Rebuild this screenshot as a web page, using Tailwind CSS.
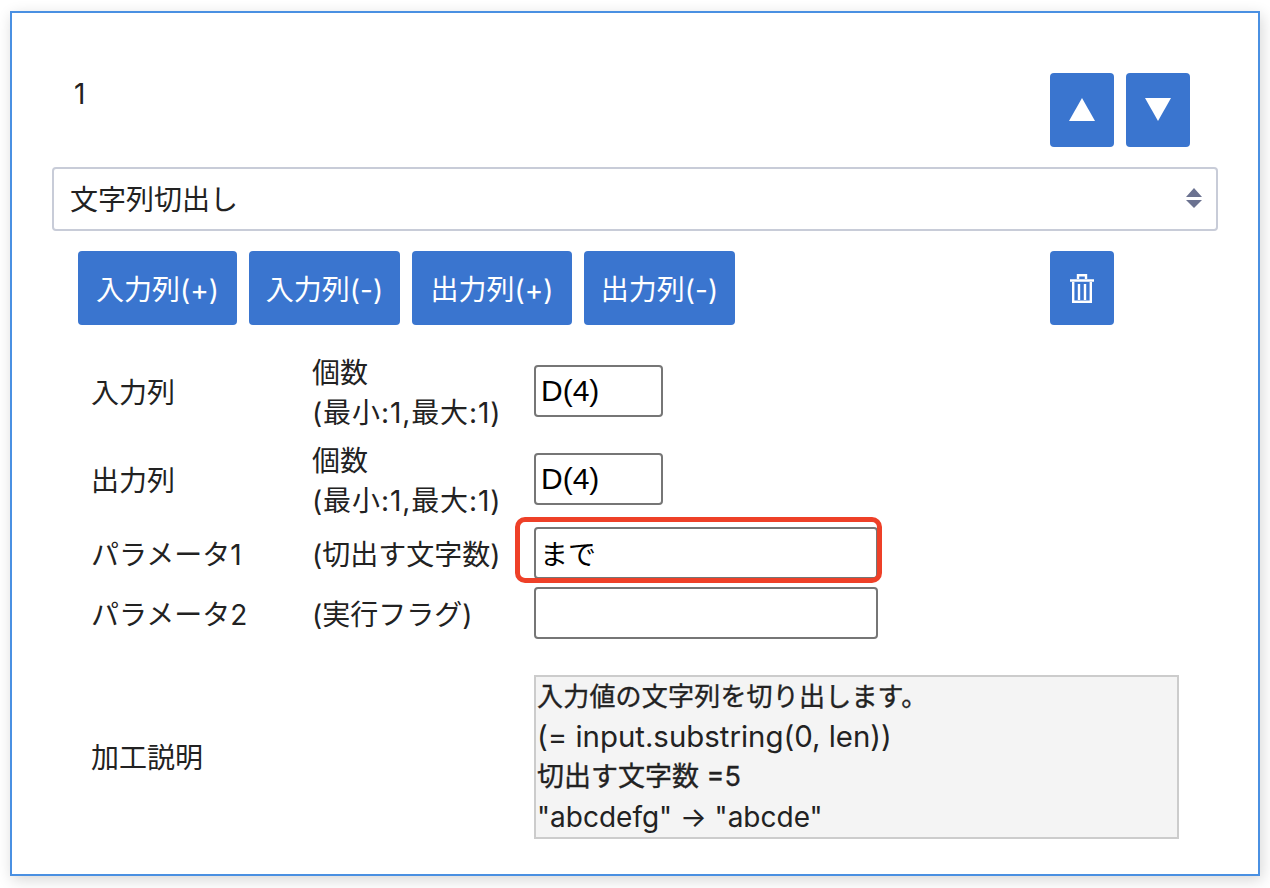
<!DOCTYPE html>
<html lang="ja">
<head>
  <meta charset="UTF-8">
  <title>加工設定</title>
  <script src="https://cdn.jsdelivr.net/npm/@tailwindcss/browser@4"></script>
</head>
<body class="bg-white h-[888px] overflow-hidden font-['Inter','Noto_Sans_CJK_JP',sans-serif] text-[28px] text-[#222]">

  <!-- Card -->
  <div class="ml-[10px] mt-[11px] w-[1250px] h-[865px] border-2 border-[#4a90e2] bg-white shadow-[2px_4px_14px_rgba(0,0,0,0.16)] pt-[60px]">

    <!-- Number and up / down -->
    <div class="flex h-[74px] pl-[62px] pr-[68px]">
      <div class="flex-1 text-[28px] leading-[42px]">1</div>
      <div class="flex gap-3">
        <button class="w-16 h-[74px] rounded-[4px] bg-[#3a75cf] flex items-center justify-center">
          <svg width="26" height="24" viewBox="0 0 26 24"><path d="M13 0 26 23H0Z" fill="#fff"/></svg>
        </button>
        <button class="w-16 h-[74px] rounded-[4px] bg-[#3a75cf] flex items-center justify-center">
          <svg width="26" height="24" viewBox="0 0 26 24"><path d="M0 0H26L13 23Z" fill="#fff"/></svg>
        </button>
      </div>
    </div>

    <!-- Select -->
    <div class="relative ml-[40px] mt-[20px] w-[1166px] h-[64px]">
      <select class="appearance-none w-full h-full rounded-[4px] border-2 border-[#c8ccd8] bg-white pl-[16px] pt-[2px] text-[28px] leading-[56px] text-[#222]">
        <option>文字列切出し</option>
      </select>
      <svg class="absolute right-[16px] top-[21px]" width="16" height="21" viewBox="0 0 16 21"><path d="M8 0 16 9H0ZM0 12H16L8 20Z" fill="#6b7290"/></svg>
    </div>

    <!-- Action buttons -->
    <div class="flex mt-[20px] pl-[66px] h-[74px] text-white text-[28px] leading-[78px]">
      <button class="w-[159px] rounded-[4px] bg-[#3a75cf]">入力列(+)</button>
      <button class="w-[151px] ml-3 rounded-[4px] bg-[#3a75cf]">入力列(-)</button>
      <button class="w-[160px] ml-3 rounded-[4px] bg-[#3a75cf]">出力列(+)</button>
      <button class="w-[151px] ml-3 rounded-[4px] bg-[#3a75cf]">出力列(-)</button>
      <button class="w-16 ml-[315px] rounded-[4px] bg-[#3a75cf] flex items-center justify-center">
        <svg width="24" height="29" viewBox="0 0 24 29" fill="none" stroke="#fff" stroke-width="2.4"><path d="M0 6.5H24M8 5V1.2H16V5M3.2 8V27.8H20.800V8M9 10V26M15 10V26"/></svg>
      </button>
    </div>

    <!-- Form rows -->
    <div class="ml-[80px] mt-[40px] grid grid-cols-[221px_221px_1fr] text-[28px]">
      <div class="h-[88px] pt-[6px] -ml-[1px] leading-[44px]">入力列</div>
      <div class="h-[88px] -mt-[12px] -ml-[1px] leading-[40px] whitespace-nowrap">個数<br><span class="tracking-[0.9px]">(最小:1,最大:1)</span></div>
      <div class="h-[88px]"><input value="D(4)" class="w-[129px] h-[52px] rounded-[4px] border-2 border-[#767676] px-[5px] text-[30px] text-black font-['Liberation_Sans',sans-serif]"></div>

      <div class="h-[74px] pt-[6px] -ml-[1px] leading-[44px]">出力列</div>
      <div class="h-[74px] -mt-[12px] -ml-[1px] leading-[40px] whitespace-nowrap">個数<br><span class="tracking-[0.9px]">(最小:1,最大:1)</span></div>
      <div class="h-[74px]"><input value="D(4)" class="w-[129px] h-[52px] rounded-[4px] border-2 border-[#767676] px-[5px] text-[30px] text-black font-['Liberation_Sans',sans-serif]"></div>

      <div class="h-[60px] -ml-[1px] pt-[2px] leading-[52px]">パラメータ1</div>
      <div class="h-[60px] -ml-[1px] pt-[2px] leading-[52px] whitespace-nowrap">(切出す文字数)</div>
      <div class="h-[60px] relative">
        <input value="まで" class="w-[344px] h-[52px] rounded-[4px] border-2 border-[#767676] px-[4px] text-[28px] text-black">
        <div class="absolute -left-[19px] -top-[10px] w-[367px] h-[66px] rounded-[10px] border-[5px] border-[#ee4028]"></div>
      </div>

      <div class="h-[88px] -ml-[1px] pt-[2px] leading-[52px]">パラメータ2</div>
      <div class="h-[88px] -ml-[1px] pt-[2px] leading-[52px] whitespace-nowrap">(実行フラグ)</div>
      <div class="h-[88px]"><input class="w-[344px] h-[52px] rounded-[4px] border-2 border-[#767676] px-[5px] text-[28px] text-black"></div>

      <div class="h-[164px] -ml-[1px] pt-[2px] flex items-center">加工説明</div>
      <div class="h-[164px]"></div>
      <div class="h-[164px] w-[645px] border-2 border-[#cccccc] bg-[#f4f4f4] pl-[1px] text-[26px] leading-[40px]">
        <div class="tracking-[0.2px] [-webkit-text-stroke:0.35px_#222]">入力値の文字列を切り出します。</div>
        <div class="text-[29.4px]">(= input.substring(0, len))</div>
        <div class="text-[27px] [-webkit-text-stroke:0.35px_#222]">切出す文字数 =5</div>
        <div class="text-[28px]">"abcdefg" → "abcde"</div>
      </div>
    </div>
  </div>
</body>
</html>
